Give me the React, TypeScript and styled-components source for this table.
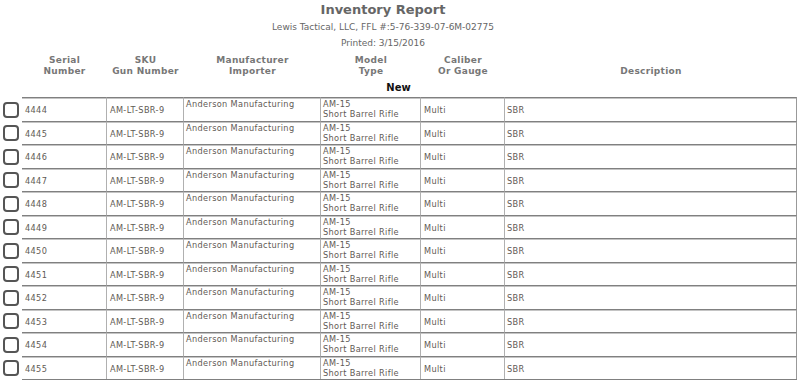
import styled, { createGlobalStyle } from "styled-components";

const GlobalStyle = createGlobalStyle`
  html, body {
    margin: 0;
    padding: 0;
    background: #fff;
  }
  body {
    font-family: "DejaVu Sans", Verdana, sans-serif;
  }
`;

const COLUMNS = "22px 85px 77px 137px 100px 84px 1fr";

const Page = styled.div`
  width: 797px;
  color: #5f5a55;
`;

const Heading = styled.header`
  width: 766px;
  text-align: center;
  color: #666;
`;

const Title = styled.h1`
  margin: 1px 0 0;
  font-size: 13px;
  line-height: 18px;
  font-weight: bold;
`;

const SubLine = styled.div`
  font-size: 9px;
  line-height: 16px;
`;

const HeaderRow = styled.div`
  display: grid;
  grid-template-columns: ${COLUMNS};
  margin-top: 4px;
  font-size: 9px;
  line-height: 11px;
  font-weight: bold;
  letter-spacing: 0.3px;
  color: #777;
  text-align: center;
`;

const Section = styled.div`
  text-align: center;
  font-size: 10px;
  line-height: 20px;
  padding-top: 1px;
  margin-bottom: -1px;
  font-weight: bold;
  color: #111;
`;

const Row = styled.div`
  display: grid;
  grid-template-columns: ${COLUMNS};
  height: 23.5px;
  font-size: 8.2px;
`;

const Check = styled.div`
  display: flex;
  align-items: center;
  padding: 2px 0 0 3px;
`;

const Box = styled.span`
  width: 12px;
  height: 12px;
  border: 2px solid #555;
  border-radius: 4px;
`;

const Cell = styled.div<{ $top?: boolean; $pad?: number; $last?: boolean }>`
  display: flex;
  flex-direction: column;
  justify-content: ${({ $top }) => ($top ? "flex-start" : "center")};
  padding: ${({ $top }) => ($top ? "1px" : "2px")} 0 0 ${({ $pad }) => $pad ?? 2}px;
  border-top: 1px solid #808080;
  box-shadow: inset 0 1px 0 #c4c4c4;
  border-right: 1px solid ${({ $last }) => ($last ? "#999" : "#b0b0b0")};
  line-height: 10px;
  letter-spacing: 0.35px;
  white-space: nowrap;
  overflow: hidden;
`;

const EndLine = styled.div`
  margin-left: 22px;
  border-top: 1px solid #808080;
  box-shadow: inset 0 1px 0 #c4c4c4;
  height: 2px;
`;

const serials = Array.from({ length: 12 }, (_, i) => String(4444 + i));

export default function App() {
  return (
    <Page>
      <GlobalStyle />
      <Heading>
        <Title>Inventory Report</Title>
        <SubLine>Lewis Tactical, LLC, FFL #:5-76-339-07-6M-02775</SubLine>
        <SubLine>Printed: 3/15/2016</SubLine>
      </Heading>

      <HeaderRow>
        <div />
        <div>Serial<br />Number</div>
        <div>SKU<br />Gun Number</div>
        <div>Manufacturer<br />Importer</div>
        <div>Model<br />Type</div>
        <div>Caliber<br />Or Gauge</div>
        <div><br />Description</div>
      </HeaderRow>

      <Section>New</Section>

      {serials.map((serial) => (
        <Row key={serial}>
          <Check>
            <Box />
          </Check>
          <Cell $pad={3}>{serial}</Cell>
          <Cell $pad={3}>AM-LT-SBR-9</Cell>
          <Cell $top>
            <span>Anderson Manufacturing</span>
          </Cell>
          <Cell $top>
            <span>AM-15</span>
            <span>Short Barrel Rifle</span>
          </Cell>
          <Cell $pad={3}>Multi</Cell>
          <Cell $last>SBR</Cell>
        </Row>
      ))}
      <EndLine />
    </Page>
  );
}
